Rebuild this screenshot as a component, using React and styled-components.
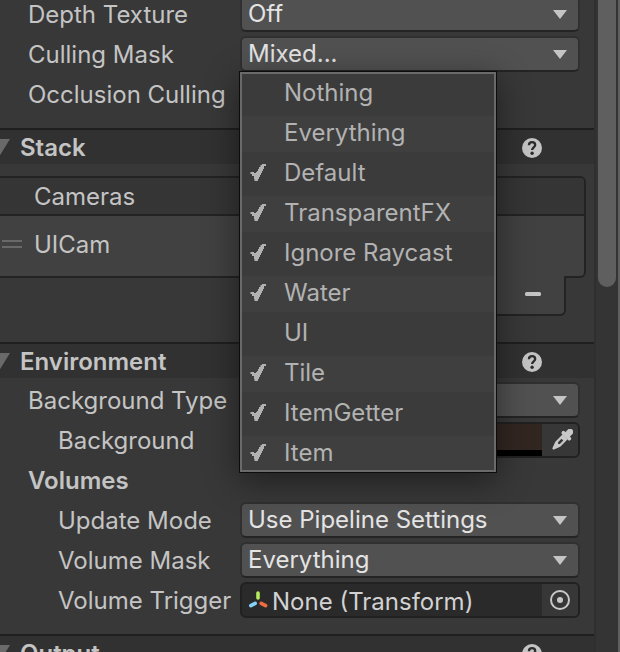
import React, { useState } from "react";
import styled, { createGlobalStyle } from "styled-components";

const GlobalStyle = createGlobalStyle`
  * {
    box-sizing: border-box;
  }
  body {
    margin: 0;
    overflow: hidden;
    background: #383838;
    color: #c4c4c4;
    font-family: Inter, sans-serif;
    font-size: 24px;
    line-height: 32px;
  }
  button, input, select {
    font: inherit;
    color: inherit;
  }
`;

const Window = styled.div`
  display: flex;
  height: 100vh;
  overflow: hidden;
`;

/* scrolled down a little, the first row is cut by the window */
const Inspector = styled.main`
  flex: 1;
  min-width: 0;
  margin-top: -4px;
`;

const Rows = styled.div`
  display: flex;
  flex-direction: column;
  gap: 4px;
  padding: ${(p) => (p.$first ? "0" : "4px")} 14px 16px 0;
`;

const Row = styled.div`
  display: grid;
  grid-template-columns: 240px 1fr;
  align-items: center;
  height: 36px;
`;

const Label = styled.label`
  padding-left: ${(p) => (p.$indent ? "58px" : "28px")};
  padding-top: 2px;
  white-space: nowrap;
`;

const GroupLabel = styled.h3`
  margin: 0;
  padding-left: 28px;
  padding-top: 2px;
  font-size: 24px;
  font-weight: 600;
`;

const SelectBox = styled.div`
  position: relative;
  display: grid;
  align-items: center;

  > select, > svg {
    grid-area: 1 / 1;
  }
  > svg {
    justify-self: end;
    margin-right: 13px;
    pointer-events: none;
  }
`;

const Select = styled.select`
  appearance: none;
  width: 100%;
  height: 36px;
  padding: 0 32px 0 6px;
  border: 2px solid #303030;
  border-bottom-color: #242424;
  border-radius: 6px;
  background: #515151;
  color: #e4e4e4;
  outline: none;
`;

const Toggle = styled.input`
  width: 28px;
  height: 28px;
  margin: 0;
`;

const Field = styled.div`
  display: flex;
  align-items: center;
  height: 36px;
  border: 2px solid #212121;
  border-radius: 6px;
  background: #2a2a2a;
  overflow: hidden;
`;

const ColorInput = styled.input`
  appearance: none;
  flex: 1;
  min-width: 0;
  height: 32px;
  padding: 0;
  border: 0;
  border-bottom: 6px solid #000;
  background: none;

  &::-webkit-color-swatch-wrapper {
    padding: 0;
  }
  &::-webkit-color-swatch {
    border: 0;
    border-radius: 0;
  }
`;

const ObjectInput = styled.input`
  flex: 1;
  min-width: 0;
  height: 32px;
  padding: 3px 0 0 4px;
  border: 0;
  background: none;
  color: #d2d2d2;
  outline: none;
`;

const FieldButton = styled.button`
  display: flex;
  align-items: center;
  justify-content: center;
  width: 36px;
  height: 32px;
  padding: 0;
  border: 0;
  background: #373737;
`;

const SectionHeader = styled.header`
  display: flex;
  align-items: center;
  height: 36px;
  padding: 2px 52px 0 0;
  border-top: 2px solid #1f1f1f;
  background: #313131;
`;

const Foldout = styled.button`
  display: flex;
  align-items: center;
  gap: 10px;
  flex: 1;
  padding: 0;
  border: 0;
  background: none;
  font-weight: 600;
  text-align: left;
`;

const IconButton = styled.button`
  display: flex;
  padding: 0;
  border: 0;
  background: none;
`;

const ListWrap = styled.div`
  padding: 12px 8px 26px 0;
`;

const List = styled.div`
  border: 2px solid #232323;
  border-left: 0;
  border-radius: 0 6px 6px 0;
  background: #414141;
`;

const ListHeader = styled.div`
  height: 38px;
  padding: 3px 0 0 34px;
  border-bottom: 2px solid #232323;
  border-radius: 0 4px 0 0;
  background: #353535;
`;

const ListItem = styled.div`
  display: flex;
  align-items: center;
  gap: 12px;
  height: 60px;
  padding: 0 0 2px 2px;
`;

const DragHandle = styled.span`
  width: 20px;
  height: 8px;
  margin-bottom: 2px;
  border: solid #686868;
  border-width: 2px 0;
`;

/* pulled up over the list's bottom line, so the two boxes join */
const ListFooter = styled.div`
  display: flex;
  align-items: center;
  justify-content: space-between;
  width: 120px;
  height: 40px;
  margin: -2px 20px 0 auto;
  padding: 0 23px 2px;
  border: 2px solid #232323;
  border-top: 0;
  border-radius: 0 0 6px 6px;
  background: #414141;
`;

const Menu = styled.div`
  position: absolute;
  z-index: 1;
  top: 35px;
  left: -1px;
  width: 258px;
  border: 1px solid #0c0c0c;
  background: #6a6a6a;
  padding: 2px;
  box-shadow: 0 8px 32px rgba(0, 0, 0, 0.45);
`;

const MenuItem = styled.button`
  display: grid;
  grid-template-columns: 34px 1fr;
  align-items: center;
  width: 100%;
  height: 44px;
  padding: 0 0 2px 8px;
  border: 0;
  background: #3b3b3b;
  color: #b2b2b2;
  text-align: left;

  &:nth-child(even) {
    height: 36px;
    background: #3f3f3f;
  }
  &:first-child {
    height: 42px;
    padding-bottom: 4px;
  }
  &:last-child {
    height: 34px;
    padding-bottom: 0;
  }
  > svg {
    margin-bottom: 2px;
  }
  > span {
    grid-column: 2;
  }
`;

const ScrollTrack = styled.div`
  flex: none;
  width: 26px;
  padding: 0 2px;
  border-left: 2px solid #2f2f2f;
  border-right: 2px solid #5f5f5f;
  background: #343434;
`;

const ScrollThumb = styled.div`
  height: 44%;
  border-radius: 0 0 10px 10px;
  background: #5f5f5f;
`;

const Arrow = () => (
  <svg width="14" height="9" viewBox="0 0 14 9" aria-hidden="true">
    <path d="M0 0h14L7 9z" fill="#c4c4c4" />
  </svg>
);

const HelpIcon = () => (
  <svg width="20" height="20" viewBox="0 0 20 20" aria-hidden="true">
    <circle cx="10" cy="10" r="10" fill="#c4c4c4" />
    <path
      d="M6.9 7.2C7 5.2 8.2 4.2 10 4.2c1.9 0 3.2 1.1 3.2 2.8 0 2.3-3.1 2.3-3.1 5"
      fill="none"
      stroke="#2c2c2c"
      strokeWidth="2.3"
    />
    <circle cx="10.1" cy="15.3" r="1.7" fill="#2c2c2c" />
  </svg>
);

/* blocky tick, dim steps along its edges */
const CheckIcon = () => (
  <svg width="16" height="17" viewBox="0 0 16 17" shapeRendering="crispEdges" aria-hidden="true">
    <path d="M10 1h2v2h-2zM0 8h2v2H0zM4 15h1v2H4z" fill="#7c7c7c" />
    <path
      d="M12 0h4v2h-2v3h-1v2h-1v2h-1v2h-1v2H9v2H8v2H5v-2H4v-3H2v-2H1V8h3v1h2V8h1V7h1V5h1V3h2V1h1z"
      fill="#b2b2b2"
    />
  </svg>
);

const DropperIcon = () => (
  <svg width="26" height="22" viewBox="-4 0 26 22" aria-hidden="true">
    <g transform="translate(13.5 8.5) rotate(45)" fill="#c8c8c8">
      <rect x="-3.2" y="-11" width="6.4" height="10" rx="3" />
      <rect x="-6" y="-4.5" width="12" height="3.8" rx="1.6" />
      <path
        fillRule="evenodd"
        d="M-3.5-1h7V9.5L.8 16.5h-1.6L-3.5 9.5zM-1.3 3v4.5a1.3 1.3 0 0 0 2.6 0V3z"
      />
    </g>
  </svg>
);

const AxisIcon = () => (
  <svg width="20" height="20" viewBox="0 0 20 20" aria-hidden="true">
    <g fill="none" strokeWidth="3.6" strokeLinecap="round">
      <path d="M10 3v5" stroke="#b4ec5c" />
      <path d="M7.2 13.3L2.8 15.7" stroke="#86d2f6" />
      <path d="M13.2 13.3l4.4 2.4" stroke="#ee6c3e" />
    </g>
  </svg>
);

const TargetIcon = () => (
  <svg width="20" height="20" viewBox="0 0 20 20" aria-hidden="true">
    <circle cx="10" cy="10" r="9" fill="none" stroke="#c8c8c8" strokeWidth="2" />
    <circle cx="10" cy="10" r="3" fill="#c8c8c8" />
  </svg>
);

const Header = ({ title }) => (
  <SectionHeader>
    <Foldout type="button" aria-expanded="true">
      <svg width="10" height="18" viewBox="12 0 10 18" aria-hidden="true">
        <path d="M0 0h22L11 18z" fill="#6a6a6a" />
      </svg>
      <span>{title}</span>
    </Foldout>
    <IconButton type="button" aria-label={`${title} help`}>
      <HelpIcon />
    </IconButton>
  </SectionHeader>
);

const SelectRow = ({ id, label, value, indent, children }) => (
  <Row>
    <Label htmlFor={id} $indent={indent}>
      {label}
    </Label>
    <SelectBox>
      <Select id={id} defaultValue={value}>
        <option>{value}</option>
      </Select>
      <Arrow />
      {children}
    </SelectBox>
  </Row>
);

const layers = ["Default", "TransparentFX", "Ignore Raycast", "Water", "UI", "Tile", "ItemGetter", "Item"];

const App = () => {
  const [mask, setMask] = useState(layers.filter((l) => l !== "UI"));
  const [background, setBackground] = useState("#322621");

  const toggleLayer = (name) => {
    if (name === "Nothing") return setMask([]);
    if (name === "Everything") return setMask(layers);
    setMask(mask.includes(name) ? mask.filter((l) => l !== name) : [...mask, name]);
  };

  return (
    <Window>
      <GlobalStyle />
      <Inspector>
        <Rows $first>
          <SelectRow id="depth" label="Depth Texture" value="Off" />
          <SelectRow id="culling" label="Culling Mask" value="Mixed...">
            <Menu role="menu">
              {["Nothing", "Everything", ...layers].map((name) => (
                <MenuItem
                  key={name}
                  type="button"
                  role="menuitemcheckbox"
                  aria-checked={mask.includes(name)}
                  onClick={() => toggleLayer(name)}
                >
                  {mask.includes(name) && <CheckIcon />}
                  <span>{name}</span>
                </MenuItem>
              ))}
            </Menu>
          </SelectRow>
          <Row>
            <Label htmlFor="occlusion">Occlusion Culling</Label>
            <Toggle id="occlusion" type="checkbox" defaultChecked />
          </Row>
        </Rows>

        <Header title="Stack" />
        <ListWrap>
          <List>
            <ListHeader>Cameras</ListHeader>
            <ListItem>
              <DragHandle />
              <span>UICam</span>
            </ListItem>
          </List>
          <ListFooter>
            <IconButton type="button" aria-label="Add camera">
              <svg width="16" height="16" viewBox="0 0 16 16">
                <path d="M8 2v12M2 8h12" stroke="#c4c4c4" strokeWidth="4" strokeLinecap="round" />
              </svg>
            </IconButton>
            <IconButton type="button" aria-label="Remove camera">
              <svg width="16" height="4" viewBox="0 0 16 4">
                <rect width="16" height="4" rx="1.5" fill="#c4c4c4" />
              </svg>
            </IconButton>
          </ListFooter>
        </ListWrap>

        <Header title="Environment" />
        <Rows>
          <SelectRow id="bgtype" label="Background Type" value="" />
          <Row>
            <Label htmlFor="bg" $indent>
              Background
            </Label>
            <Field>
              <ColorInput
                id="bg"
                type="color"
                value={background}
                onChange={(e) => setBackground(e.target.value)}
              />
              <FieldButton type="button" aria-label="Pick color">
                <DropperIcon />
              </FieldButton>
            </Field>
          </Row>
          <Row>
            <GroupLabel>Volumes</GroupLabel>
          </Row>
          <SelectRow id="update" label="Update Mode" value="Use Pipeline Settings" indent />
          <SelectRow id="volmask" label="Volume Mask" value="Everything" indent />
          <Row>
            <Label htmlFor="trigger" $indent>
              Volume Trigger
            </Label>
            <Field>
              <svg width="6" height="1" aria-hidden="true" />
              <AxisIcon />
              <ObjectInput id="trigger" readOnly value="None (Transform)" />
              <FieldButton type="button" aria-label="Select object">
                <TargetIcon />
              </FieldButton>
            </Field>
          </Row>
        </Rows>

        <Header title="Output" />
      </Inspector>
      <ScrollTrack>
        <ScrollThumb />
      </ScrollTrack>
    </Window>
  );
};

export default App;
